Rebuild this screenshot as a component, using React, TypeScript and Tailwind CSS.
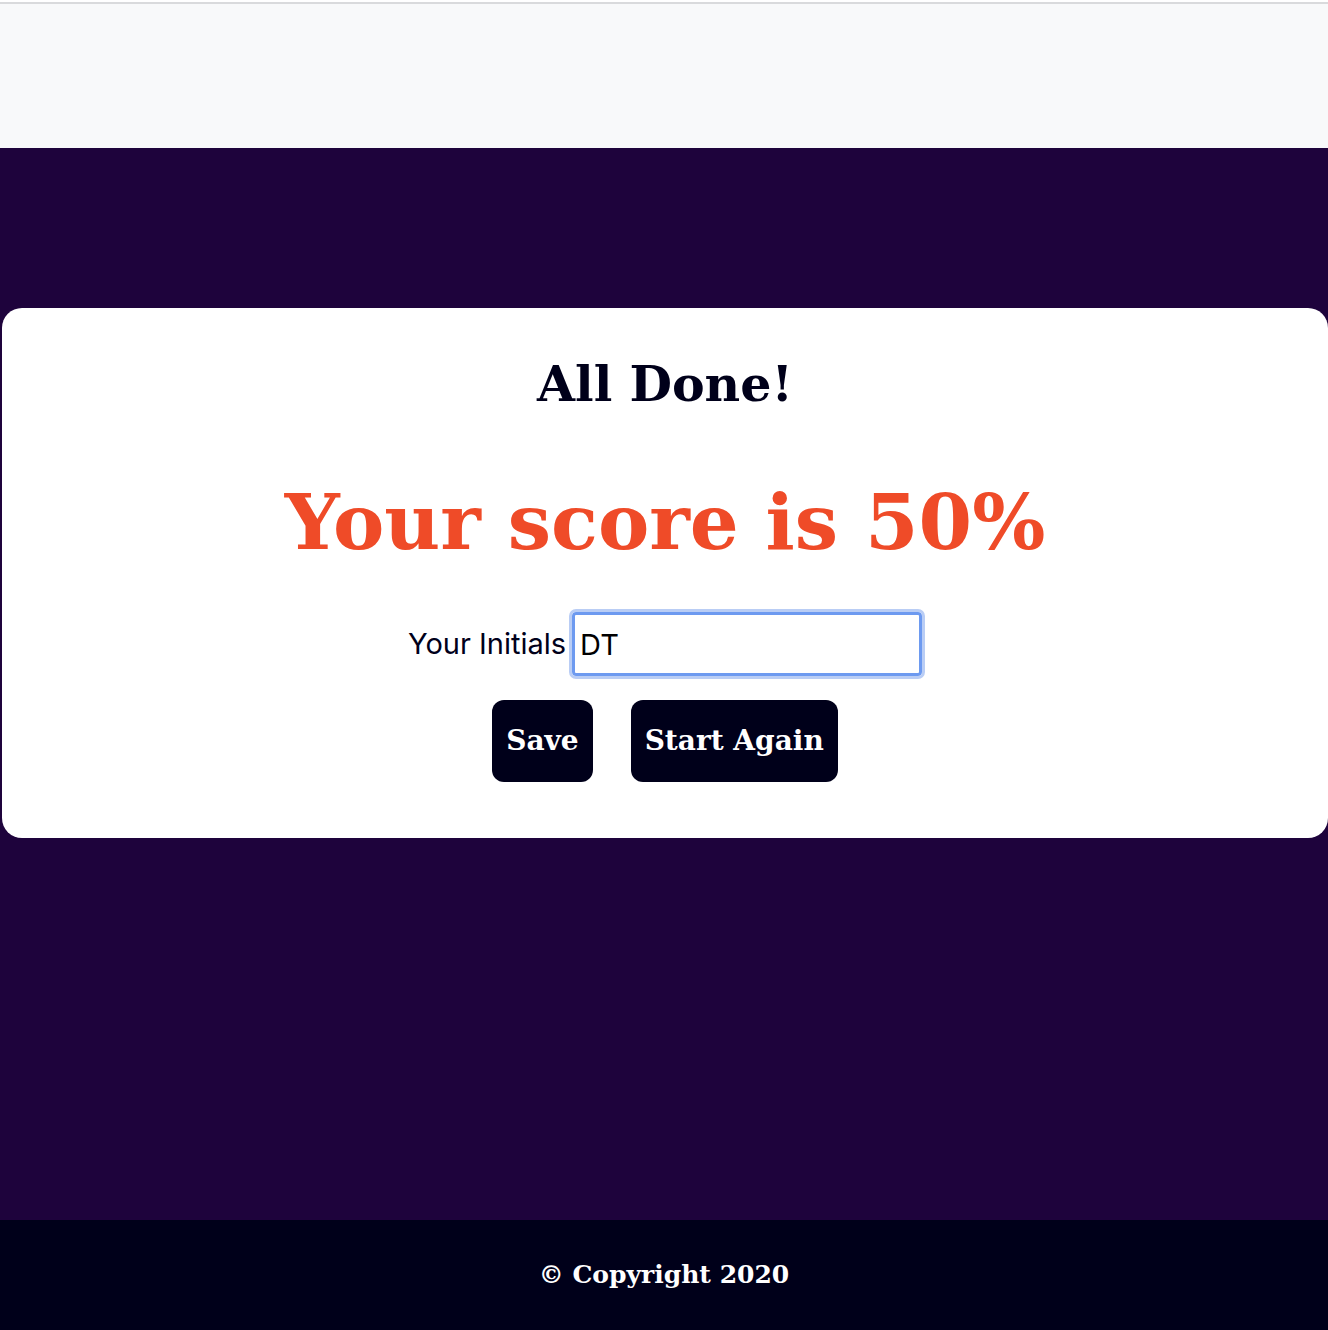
import { useState } from 'react';

const slab = { fontFamily: '"DejaVu Serif", "Liberation Serif", serif' };

export default function App() {
    const [initials, setInitials] = useState('DT');

    return (
        <div className="flex min-h-screen flex-col overflow-x-hidden">
            {/* Header */}
            <header className="mt-[2px] h-[146px] border-t-2 border-[#d9dadc] bg-[#f8f9fa]"></header>

            {/* Result */}
            <main className="flex-1 bg-[#1e033c] pt-[160px] pb-[382px]">
                <div className="ml-[2px] flex flex-col items-center rounded-[20px] bg-white pt-[44px] pb-[56px]">
                    <h2
                        className="text-[49px] leading-[64px] font-bold text-[#00001a]"
                        style={slab}
                    >
                        All Done!
                    </h2>
                    <h1
                        className="mt-[56px] text-[77px] leading-[100px] font-bold text-[#ef4b28]"
                        style={slab}
                    >
                        Your score is 50%
                    </h1>
                    <div className="mt-[40px] flex items-center gap-[6px] font-['Inter'] text-[29px] text-[#00001a]">
                        <label htmlFor="initials">Your Initials</label>
                        <input
                            id="initials"
                            value={initials}
                            onChange={(e) => setInitials(e.target.value)}
                            className="h-[64px] w-[350px] rounded-[4px] border-[3px] border-[#6d9af0] px-[5px] text-[29px] text-black outline-[3px] outline-[#b9cdf5]"
                        />
                    </div>
                    <div className="mt-[24px] flex gap-[38px]" style={slab}>
                        <button className="h-[82px] rounded-[12px] bg-[#00001a] px-[14px] text-[28px] font-bold text-white">
                            Save
                        </button>
                        <button className="h-[82px] rounded-[12px] bg-[#00001a] px-[14px] text-[28px] font-bold text-white">
                            Start Again
                        </button>
                    </div>
                </div>
            </main>

            {/* Footer */}
            <footer className="flex h-[110px] items-center justify-center bg-[#00001a]">
                <p className="text-[25px] font-bold text-white" style={slab}>
                    © Copyright 2020
                </p>
            </footer>
        </div>
    );
}
